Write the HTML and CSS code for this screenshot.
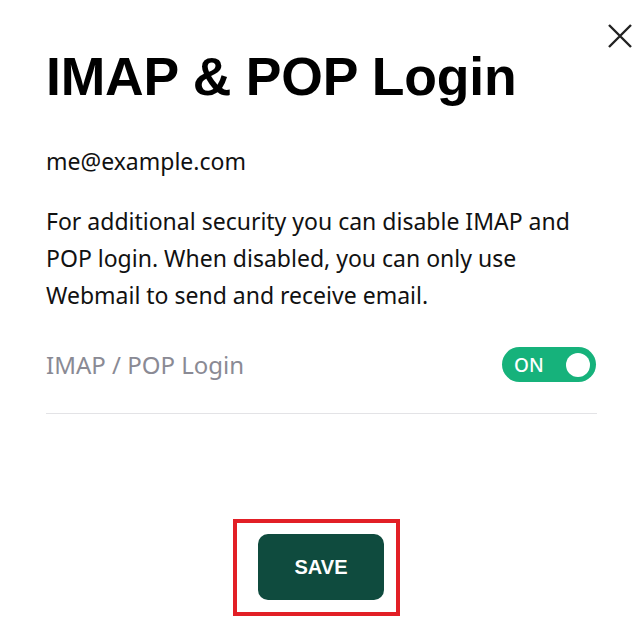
FILE: index.html
```html
<!DOCTYPE html>
<html lang="en">
<head>
    <meta charset="UTF-8">
    <meta name="viewport" content="width=device-width, initial-scale=1.0">
    <title>IMAP &amp; POP Login</title>
    <link rel="stylesheet" href="styles.css">
</head>
<body>
    <div class="modal">
        <button class="close" aria-label="Close">
            <svg width="26" height="26" viewBox="0 0 26 26">
                <path d="M2 2L24 24M24 2L2 24" stroke="#222" stroke-width="2.4" fill="none"/>
            </svg>
        </button>
        <h1 class="title">IMAP &amp; POP Login</h1>
        <p class="email">me@example.com</p>
        <p class="desc">For additional security you can disable IMAP and POP login. When disabled, you can only use Webmail to send and receive email.</p>
        <div class="row">
            <span class="label">IMAP / POP Login</span>
            <div class="toggle">
                <span class="toggleText">ON</span>
                <span class="knob"></span>
            </div>
        </div>
        <div class="actions">
            <div class="highlight">
                <button class="save">SAVE</button>
            </div>
        </div>
    </div>
</body>
</html>
```

FILE: styles.css
```css
*{margin: 0;padding: 0;box-sizing: border-box;}
body{background: #fff;font-family: "Noto Sans", "Liberation Sans", sans-serif;color: #111;}
.modal{position: relative;width: 643px;height: 631px;padding: 47px 46px 0 46px;}
.close{position: absolute;top: 23px;right: 10px;background: none;border: none;cursor: pointer;}
.title{font-family: "Liberation Sans", Arial, sans-serif;font-weight: 700;font-size: 53.5px;line-height: 60px;color: #000;letter-spacing: -0.2px;}
.email{margin-top: 39px;font-size: 23px;line-height: 30px;}
.desc{margin-top: 27px;font-size: 23px;line-height: 37px;width: 548px;}
.row{display: flex;justify-content: space-between;align-items: center;margin-top: 33px;padding: 0 1px 31px 0;border-bottom: 1px solid #e3e3e6;}
.label{font-size: 24px;color: #8a8a94;}
.toggle{display: flex;align-items: center;justify-content: space-between;width: 94px;height: 35px;border-radius: 18px;background: #16b27b;padding: 0 6px 0 12px;}
.toggleText{color: #fff;font-size: 19px;font-weight: 500;}
.knob{width: 24px;height: 24px;border-radius: 50%;background: #fff;}
.actions{display: flex;justify-content: center;margin-top: 105px;padding-right: 10px;}
.highlight{border: 4px solid #e21f26;padding: 11px 12px 12px 21px;}
.save{width: 126px;height: 66px;border: none;border-radius: 10px;background: #0f4b3e;color: #fff;font-family: "Liberation Sans", Arial, sans-serif;font-weight: 700;font-size: 20px;cursor: pointer;}
```
